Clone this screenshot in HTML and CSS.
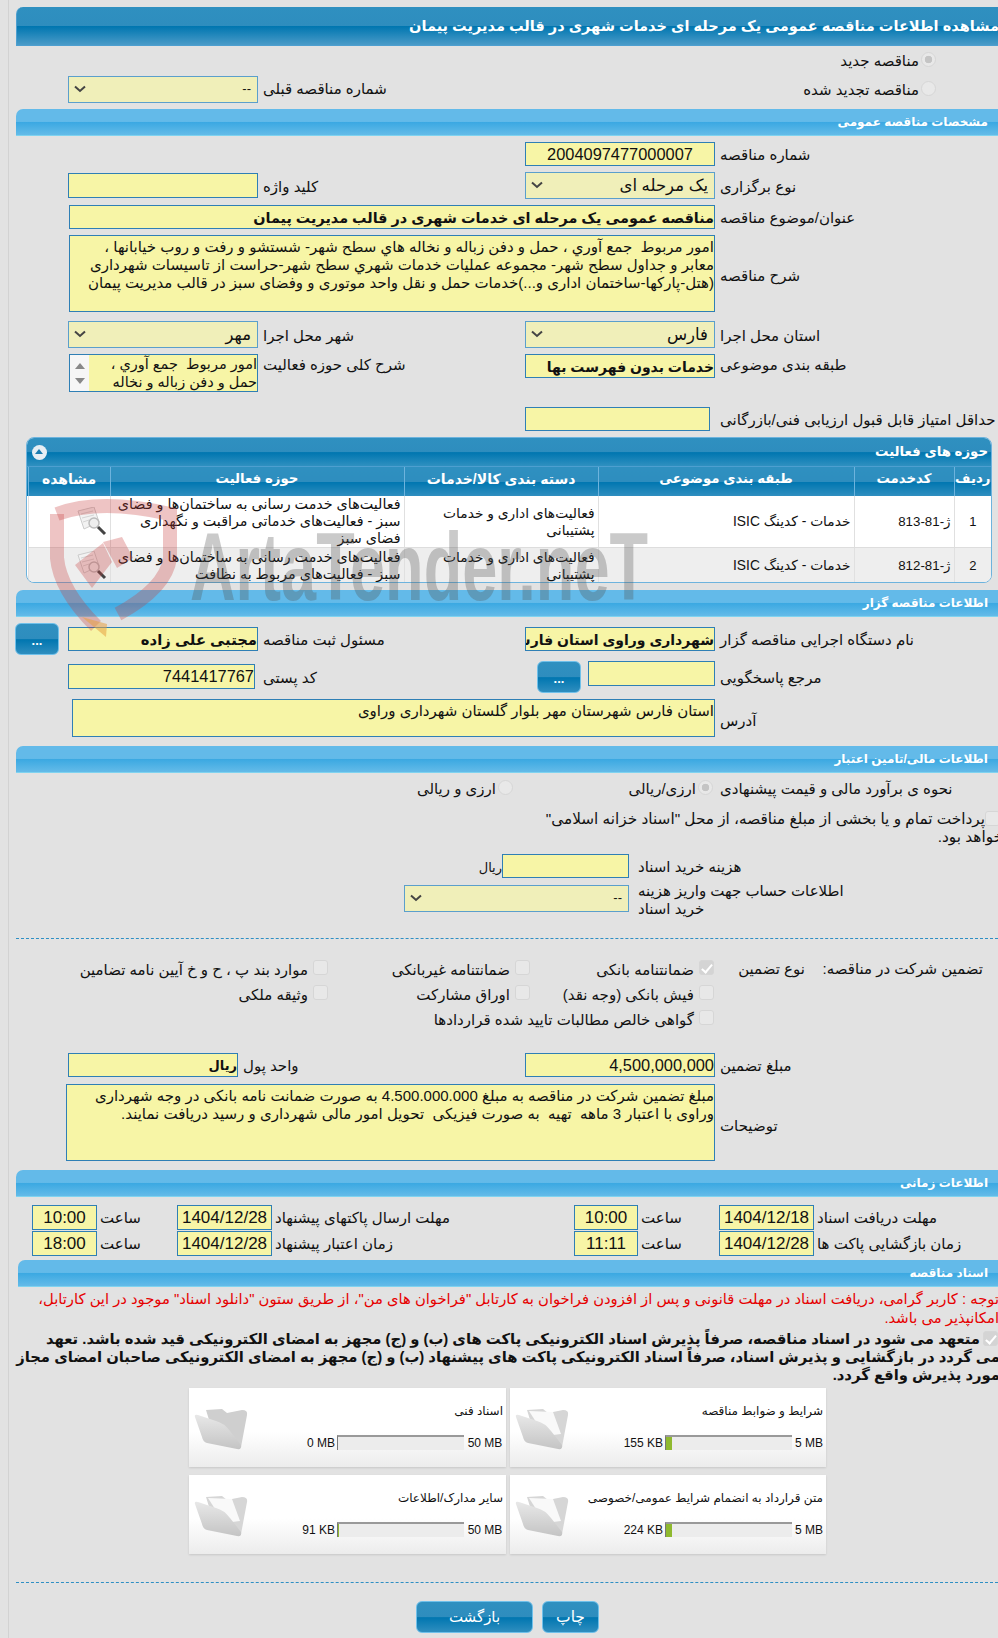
FILE: index.html
```html
<!DOCTYPE html>
<html lang="fa" dir="rtl">
<head>
<meta charset="utf-8">
<title>مشاهده اطلاعات مناقصه</title>
<link rel="stylesheet" href="styles.css">
</head>
<body>
<svg class="defs" width="0" height="0" aria-hidden="true">
  <defs>
    <symbol id="chev" viewBox="0 0 12 8"><path d="M1 1.5 L6 6 L11 1.5" fill="none" stroke="#444" stroke-width="2"/></symbol>
    <linearGradient id="fgrad" x1="0" y1="0" x2="0" y2="1"><stop offset="0" stop-color="#e8e8e8"/><stop offset="1" stop-color="#c4c4c4"/></linearGradient>
    <symbol id="folder" viewBox="0 0 54 44">
      <path d="M12 4 L28 3 L33 7 L48 4 Q54 4 53 9 L47 41 L20 30 Z" fill="#d6d6d6"/>
      <path d="M14 5 L38 6 L46 28 L30 30 Z" fill="#f9f9f9"/>
      <path d="M1 11 Q0 8 4 9 L22 15 Q30 17 36 25 L47 39 Q48 44 43 43 L13 37 Q9 36 8 31 Z" fill="url(#fgrad)"/>
    </symbol>
    <symbol id="folder-empty" viewBox="0 0 54 44">
      <path d="M12 4 L28 3 L33 7 L48 4 Q54 4 53 9 L47 41 L20 30 Z" fill="#cfcfcf"/>
      <path d="M1 11 Q0 8 4 9 L22 15 Q30 17 36 25 L47 39 Q48 44 43 43 L13 37 Q9 36 8 31 Z" fill="url(#fgrad)"/>
    </symbol>
    <symbol id="view" viewBox="0 0 30 30">
      <path d="M1 4 L17 0 L22 15 L7 22 Z" fill="#f2f2f2" stroke="#ccc"/>
      <path d="M4 7 L16 4 M5 11 L17 8 M6 15 L12 13" stroke="#d4d4d4"/>
      <circle cx="17" cy="16" r="5" fill="#eee" stroke="#bbb" stroke-width="1.5"/>
      <path d="M21 20 L28 27" stroke="#444" stroke-width="3"/>
    </symbol>
  </defs>
</svg>
<main class="page">
  <h1 class="title"><span class="title-text">مشاهده اطلاعات مناقصه عمومی یک مرحله ای خدمات شهری در قالب مدیریت پیمان</span></h1>

  <div class="row mt6 h20"><label class="opt opt-top"><input type="radio" disabled checked><span>مناقصه جدید</span></label></div>
  <div class="row mt4 h27">
    <label class="opt opt-top opt-second span2"><input type="radio" disabled><span>مناقصه تجدید شده</span></label>
    <div class="lbl">شماره مناقصه قبلی</div>
    <div class="sel small">--<svg class="chev"><use href="#chev"/></svg></div>
  </div>

  <h2 class="bar mt6">مشخصات مناقصه عمومی</h2>
  <div class="row mt6 h24">
    <div class="lbl">شماره مناقصه</div>
    <div class="fld num center">2004097477000007</div>
  </div>
  <div class="row mt6 h27">
    <div class="lbl lbl-sel">نوع برگزاری</div>
    <div class="sel">یک مرحله ای<svg class="chev"><use href="#chev"/></svg></div>
    <div class="lbl lbl-sel">کلید واژه</div>
    <div class="fld h25 mt1"></div>
  </div>
  <div class="row mt6 h24">
    <div class="lbl">عنوان/موضوع مناقصه</div>
    <div class="fld bold w646">مناقصه عمومی یک مرحله ای خدمات شهری در قالب مدیریت پیمان</div>
  </div>
  <div class="row mt6 h77">
    <div class="lbl lbl-desc-top">شرح مناقصه</div>
    <div class="fld multi w646">امور مربوط&nbsp; جمع آوري ، حمل و دفن زباله و نخاله هاي سطح شهر- شستشو و رفت و روب خیابانها ،<br>معابر و جداول سطح شهر- مجموعه عمليات خدمات شهري سطح شهر-حراست از تاسیسات شهرداری<br>(هتل-پارکها-ساختمان اداری و...)خدمات حمل و نقل واحد موتوری و وفضای سبز در قالب مدیریت پیمان</div>
  </div>
  <div class="row mt9 h27">
    <div class="lbl lbl-sel">استان محل اجرا</div>
    <div class="sel">فارس<svg class="chev"><use href="#chev"/></svg></div>
    <div class="lbl lbl-sel">شهر محل اجرا</div>
    <div class="sel">مهر<svg class="chev"><use href="#chev"/></svg></div>
  </div>
  <div class="row mt6 h38">
    <div class="lbl lbl-top">طبقه بندی موضوعی</div>
    <div class="fld bold h24 tight-bold">خدمات بدون فهرست بها</div>
    <div class="lbl lbl-top">شرح کلی حوزه فعالیت</div>
    <div class="listbox">
      <div class="listbox-text">امور مربوط&nbsp; جمع آوري ،<br>حمل و دفن زباله و نخاله</div>
      <div class="scroll"><span class="arr-up"></span><span class="arr-down"></span></div>
    </div>
  </div>
  <div class="row mt15 h24">
    <div class="lbl nowrap">حداقل امتیاز قابل قبول ارزیابی فنی/بازرگانی</div>
    <div class="fld shift5"></div>
  </div>

  <section class="panel">
    <div class="panel-head"><span>حوزه های فعالیت</span><span class="collapse"></span></div>
    <table class="grid-table">
      <colgroup><col class="c1"><col class="c2"><col class="c3"><col class="c4"><col class="c5"><col class="c6"></colgroup>
      <thead><tr><th>ردیف</th><th>کدخدمت</th><th>طبقه بندی موضوعی</th><th class="th-wide">دسته بندی کالا/خدمات</th><th>حوزه فعالیت</th><th>مشاهده</th></tr></thead>
      <tbody>
        <tr class="r1">
          <td class="ctr">1</td><td class="code">ژ-81-813</td><td class="mid">خدمات - کدینگ ISIC</td>
          <td class="mid">فعالیت‌های اداری و خدمات<br>پشتیبانی</td>
          <td>فعالیت‌های خدمت رسانی به ساختمان‌ها و فضای<br>سبز - فعالیت‌های خدماتی مراقبت و نگهداری<br>فضای سبز</td>
          <td class="icon-cell"><svg class="view"><use href="#view"/></svg></td>
        </tr>
        <tr class="r2">
          <td class="ctr">2</td><td class="code">ژ-81-812</td><td class="mid">خدمات - کدینگ ISIC</td>
          <td class="mid">فعالیت‌های اداری و خدمات<br>پشتیبانی</td>
          <td>فعالیت‌های خدمت رسانی به ساختمان‌ها و فضای<br>سبز - فعالیت‌های مربوط به نظافت</td>
          <td class="icon-cell"><svg class="view"><use href="#view"/></svg></td>
        </tr>
      </tbody>
    </table>
  </section>

  <h2 class="bar mt7">اطلاعات مناقصه گزار</h2>
  <div class="row row5 mt6 h32">
    <div class="lbl lbl-f8">نام دستگاه اجرایی مناقصه گزار</div>
    <div class="fld bold tight-bold mt4 h24">شهرداری وراوی استان فارس</div>
    <div class="lbl lbl-f8">مسئول ثبت مناقصه</div>
    <div class="fld bold big mt4 h24">مجتبی علی زاده</div>
    <button class="btn more" type="button">...</button>
  </div>
  <div class="row mt6 h32">
    <div class="lbl lbl-f8">مرجع پاسخگویی</div>
    <div class="combo"><div class="fld w127 h25"></div><button class="btn more" type="button">...</button></div>
    <div class="lbl lbl-f8">کد پستی</div>
    <div class="fld num w187 h25 mt3">7441417767</div>
  </div>
  <div class="row mt6 h38">
    <div class="lbl lbl-low">آدرس</div>
    <div class="fld multi w643">استان فارس شهرستان مهر بلوار گلستان شهرداری وراوی</div>
  </div>

  <h2 class="bar mt9">اطلاعات مالی/تامین اعتبار</h2>
  <div class="row mt5 h22">
    <div class="lbl lbl-plain">نحوه ی برآورد مالی و قیمت پیشنهادی</div>
    <div class="options span3">
      <label class="opt opt-w"><input type="radio" disabled checked><span>ارزی/ریالی</span></label>
      <label class="opt"><input type="radio" disabled><span>ارزی و ریالی</span></label>
    </div>
  </div>
  <p class="pay"><input type="checkbox" disabled>پرداخت تمام و یا بخشی از مبلغ مناقصه، از محل "اسناد خزانه اسلامی"<br>خواهد بود.</p>
  <div class="row-doc mt6 h24">
    <div class="lbl lbl-doc">هزینه خرید اسناد</div>
    <div class="fld w127"></div>
    <span class="unit">ریال</span>
  </div>
  <div class="row-doc mt7 h27">
    <div class="lbl lbl-two">اطلاعات حساب جهت واریز هزینه<br>خرید اسناد</div>
    <div class="sel small w225">--<svg class="chev"><use href="#chev"/></svg></div>
  </div>
  <hr class="dash dash1">
  <div class="guar">
    <div class="guar-head"><span class="guar-title">تضمین شرکت در مناقصه:</span><span>نوع تضمین</span></div>
    <label class="chk"><input type="checkbox" disabled checked><span>ضمانتنامه بانکی</span></label>
    <label class="chk"><input type="checkbox" disabled><span>ضمانتنامه غیربانکی</span></label>
    <label class="chk"><input type="checkbox" disabled><span>موارد بند پ ، ح و خ آیین نامه تضامین</span></label>
    <span></span>
    <label class="chk"><input type="checkbox" disabled><span>فیش بانکی (وجه نقد)</span></label>
    <label class="chk"><input type="checkbox" disabled><span>اوراق مشارکت</span></label>
    <label class="chk"><input type="checkbox" disabled><span>وثیقه ملکی</span></label>
    <span></span>
    <label class="chk chk-wide"><input type="checkbox" disabled><span>گواهی خالص مطالبات تایید شده قراردادها</span></label>
  </div>
  <div class="row row-amount mt21 h25">
    <div class="lbl">مبلغ تضمین</div>
    <div class="fld num">4,500,000,000</div>
    <div class="lbl">واحد پول</div>
    <div class="fld bold unit-val">ریال</div>
  </div>
  <div class="row mt6 h77">
    <div class="lbl lbl-desc">توضیحات</div>
    <div class="fld multi w649">مبلغ تضمین شرکت در مناقصه به مبلغ 4.500.000.000 به صورت ضمانت نامه بانکی در وجه شهرداری<br>وراوی با اعتبار 3 ماهه&nbsp; تهیه&nbsp; به صورت فیزیکی&nbsp; تحویل امور مالی شهرداری و رسید دریافت نمایند.</div>
  </div>

  <h2 class="bar mt9">اطلاعات زمانی</h2>
  <div class="times mt8">
    <div class="lbl t-lbl">مهلت دریافت اسناد</div><div class="fld tval">1404/12/18</div>
    <div class="lbl t-lbl">ساعت</div><div class="fld tval">10:00</div>
    <div class="lbl t-lbl">مهلت ارسال پاکتهای پیشنهاد</div><div class="fld tval">1404/12/28</div>
    <div class="lbl t-lbl">ساعت</div><div class="fld tval">10:00</div>
    <div class="lbl t-lbl">زمان بازگشایی پاکت ها</div><div class="fld tval">1404/12/28</div>
    <div class="lbl t-lbl">ساعت</div><div class="fld tval">11:11</div>
    <div class="lbl t-lbl">زمان اعتبار پیشنهاد</div><div class="fld tval">1404/12/28</div>
    <div class="lbl t-lbl">ساعت</div><div class="fld tval">18:00</div>
  </div>

  <h2 class="bar bar-docs mt4">اسناد مناقصه</h2>
  <p class="notice">توجه : کاربر گرامی، دریافت اسناد در مهلت قانونی و پس از افزودن فراخوان به کارتابل "فراخوان های من"، از طریق ستون "دانلود اسناد" موجود در این کارتابل،<br>امکانپذیر می باشد.</p>
  <p class="pledge"><input type="checkbox" disabled checked>متعهد می شود در اسناد مناقصه، صرفاً پذیرش اسناد الکترونیکی پاکت های (ب) و (ج) مجهز به امضای الکترونیکی قید شده باشد. تعهد<br>می گردد در بازگشایی و پذیرش اسناد، صرفاً اسناد الکترونیکی پاکت های پیشنهاد (ب) و (ج) مجهز به امضای الکترونیکی صاحبان امضای مجاز<br>مورد پذیرش واقع گردد.</p>

  <div class="cards">
    <article class="card">
      <div class="card-body">
        <div class="card-title">شرایط و ضوابط مناقصه</div>
        <div class="meter"><span class="limit">5 MB</span><span class="track"><span class="fill" style="width:6px"></span></span><span class="size">155 KB</span></div>
      </div>
      <svg class="folder"><use href="#folder"/></svg>
    </article>
    <article class="card">
      <div class="card-body">
        <div class="card-title">اسناد فنی</div>
        <div class="meter"><span class="limit wide">50 MB</span><span class="track"><span class="fill" style="width:0"></span></span><span class="size">0 MB</span></div>
      </div>
      <svg class="folder"><use href="#folder-empty"/></svg>
    </article>
    <article class="card">
      <div class="card-body">
        <div class="card-title">متن قرارداد به انضمام شرایط عمومی/خصوصی</div>
        <div class="meter"><span class="limit">5 MB</span><span class="track"><span class="fill" style="width:6px"></span></span><span class="size">224 KB</span></div>
      </div>
      <svg class="folder"><use href="#folder"/></svg>
    </article>
    <article class="card">
      <div class="card-body">
        <div class="card-title">سایر مدارک/اطلاعات</div>
        <div class="meter"><span class="limit wide">50 MB</span><span class="track"><span class="fill" style="width:1px"></span></span><span class="size">91 KB</span></div>
      </div>
      <svg class="folder"><use href="#folder"/></svg>
    </article>
  </div>
  <hr class="dash dash2">
  <div class="actions">
    <button class="btn act-print" type="button">چاپ</button>
    <button class="btn act-back" type="button">بازگشت</button>
  </div>

  <svg class="watermark" viewBox="0 0 620 160" aria-hidden="true">
    <g fill="none" stroke="#c83c3c" stroke-opacity=".3" stroke-width="14">
      <path d="M17 24 Q60 8 130 24 L130 68 Q126 98 78 124"/>
      <path d="M17 24 L17 68 Q20 100 56 136"/>
    </g>
    <path d="M63 52 L82 47 L93 68 L77 78 Z M35 75 L63 53 L72 72 L52 98 Z" fill="#c83c3c" fill-opacity=".3"/>
    <path d="M42 127 L67 134 L66 147 Z" fill="#e8a040" fill-opacity=".55"/>
    <text class="wm-text" x="150" y="110" textLength="458" lengthAdjust="spacingAndGlyphs">ArtaTender.neT</text>
  </svg>
</main>
</body>
</html>
```
FILE: styles.css
```css
* { box-sizing: border-box; }
html, body { margin: 0; padding: 0; }
body {
  width: 998px; height: 1638px; overflow: hidden;
  background: #e2e2e2;
  font: 15px/18px "Liberation Sans", "DejaVu Sans", sans-serif;
  color: #111;
}
.defs { position: absolute; }
.page {
  position: relative;
  width: 990px; height: 1638px;
  margin-left: 8px;
  padding: 7px 0 0 7px;
  border-left: 1px solid #d2d2d2;
  overflow: hidden;
}
p, h1, h2 { margin: 0; }

.title {
  height: 39px;
  display: flex; align-items: center;
  white-space: nowrap;
  color: #fff; font-size: 14.55px; font-weight: bold;
  background: linear-gradient(#2f90c0 0, #2e8dbe 50%, #0076b0 51%, #4a9bc8 100%);
  border: 1px solid #4d9fd0; border-top: 0; border-right: 0;
  border-top-left-radius: 7px;
  overflow: hidden;
}
.title-text { margin-right: -1px; }

.bar {
  height: 27px;
  padding: 0 10px 0 0;
  color: #fff; font-size: 12px; font-weight: bold; line-height: 26px;
  background: linear-gradient(#63bae9 0, #63bae9 48%, #3aa8e2 50%, #64bbe8 100%);
  border-bottom: 1px solid #7fd3f0;
  border-top-left-radius: 7px;
}
.bar-docs { margin-left: 2px; }

.row {
  display: grid;
  grid-template-columns: 283px 190px 267px 190px;
  align-items: start;
}
.row5 { grid-template-columns: 283px 190px 267px 190px 53px; }
.row-amount { grid-template-columns: 283px 190px 287px 170px; }
.row-doc { display: grid; grid-template-columns: 369px auto auto; justify-content: start; align-items: start; }
.span2 { grid-column: span 2; }
.span3 { grid-column: span 3; }

.mt1 { margin-top: 1px; } .mt3 { margin-top: 3px; } .mt4 { margin-top: 4px; } .mt5 { margin-top: 5px; }
.mt6 { margin-top: 6px; } .mt7 { margin-top: 7px; } .mt8 { margin-top: 8px; } .mt9 { margin-top: 9px; }
.mt15 { margin-top: 15px; } .mt21 { margin-top: 21px; }
.h20 { height: 20px; } .h22 { height: 22px; } .h24 { height: 24px; } .h25 { height: 25px; }
.h27 { height: 27px; } .h32 { height: 32px; } .h38 { height: 38px; } .h77 { height: 77px; }

.lbl { text-align: left; padding: 4px 0 0 5px; white-space: nowrap; }
.lbl-sel { padding-top: 6px; }
.lbl-top { padding-top: 2px; }
.lbl-f8 { padding-top: 8px; }
.lbl-plain { padding-top: 2px; }
.lbl-low { padding-top: 13px; }
.lbl-desc { padding-top: 33px; }
.lbl-desc-top { padding-top: 32px; }
.lbl-doc { padding: 4px 0 0 9px; }
.lbl-two { padding: 0 0 0 9px; margin-top: -3px; }
.nowrap { white-space: nowrap; }

.fld {
  height: 24px;
  background: #f7f5a6;
  border: 1px solid #2f7fb5;
  overflow: hidden;
  white-space: nowrap;
  line-height: 22px;
}
.fld.h25 { height: 25px; }
.num { font-size: 16.4px; direction: ltr; text-align: right; }
.num.center { text-align: center; }
.bold { font-weight: bold; font-size: 14.4px; line-height: 24px; }
.big { font-size: 14.8px; }
.tight-bold { font-size: 14px; }
.unit-val { font-size: 13px; }
.multi { height: 100%; line-height: 18px; padding-top: 2px; }
.w127 { width: 127px; }
.w187 { width: 187px; justify-self: end; }
.w225 { width: 225px; }
.w643 { width: 643px; grid-column: span 3; }
.w646 { width: 646px; grid-column: span 3; }
.w649 { width: 649px; grid-column: span 3; }
.shift5 { margin-right: 5px; }

.sel {
  position: relative;
  height: 27px; padding-right: 6px;
  background: #f0efb9;
  border: 1px solid #5b9fcc;
  font-size: 16.5px; line-height: 25px;
}
.sel.small { font-size: 13px; line-height: 23px; }
.chev { position: absolute; left: 5px; top: 8px; width: 12px; height: 8px; }

.opt { display: flex; align-items: flex-start; gap: 2px; }
.opt-top { padding-right: 62px; }
.opt-second { padding-top: 5px; }
.opt-w { width: 200px; }
.options { display: flex; padding: 2px 2px 0 0; }
input[type=radio], input[type=checkbox] {
  appearance: none; margin: 0; flex: none;
  width: 15px; height: 15px;
  background: #e8e8e8;
  border: 1px solid #d6d6d6;
}
input[type=radio] { border-radius: 50%; }
input[type=radio]:checked { background: radial-gradient(circle, #c4c4c4 0, #c4c4c4 38%, #e8e8e8 44%); }
input[type=checkbox] { border-radius: 3px; }
input[type=checkbox]:checked { background: #d4d4d4; position: relative; }
input[type=checkbox]:checked::after {
  content: ""; position: absolute; left: 4px; top: 1px;
  width: 4px; height: 9px;
  border: solid #fff; border-width: 0 2px 2px 0;
  transform: rotate(40deg);
}

.listbox {
  display: flex; justify-content: space-between;
  width: 189px; height: 38px;
  border: 1px solid #2f7fb5;
  background: #f7f5a6;
  overflow: hidden;
  white-space: nowrap;
  font-size: 14.5px;
}
.scroll {
  flex: none; width: 19px;
  background: #f6f6f6;
  display: flex; flex-direction: column; justify-content: space-around; align-items: center;
  padding: 3px 0;
}
.arr-up { border: 5px solid transparent; border-top: 0; border-bottom: 6px solid #888; }
.arr-down { border: 5px solid transparent; border-bottom: 0; border-top: 6px solid #888; }

.panel {
  margin: 6px 6px 0 10px;
  height: 146px;
  border: 1px solid #6db3dd;
  border-radius: 8px;
  background: #fff linear-gradient(#2f90c0, #0076b0) no-repeat 0 29px / 100% 29px;
  overflow: hidden;
}
.panel-head {
  display: flex; justify-content: space-between; align-items: center;
  height: 29px; padding: 0 3px 0 5px;
  color: #fff; font-weight: bold; font-size: 13.3px;
  background: linear-gradient(#2f90c0 0, #2e8dbe 50%, #0076b0 52%, #2f90c0 100%);
  border-bottom: 1px solid #4d9fd0;
}
.collapse {
  position: relative;
  width: 15px; height: 15px; border-radius: 50%; background: #e6eef4;
}
.collapse::after {
  content: ""; position: absolute; left: 3px; top: 4px;
  border: 4px solid transparent; border-top: 0; border-bottom: 5px solid #1c7cb0;
}
.grid-table {
  width: 963px;
  table-layout: fixed; border-collapse: collapse;
}
.c1 { width: 37px; } .c2 { width: 100px; } .c3 { width: 256px; } .c4 { width: 194px; } .c5 { width: 294px; } .c6 { width: 82px; }
th {
  height: 29px; padding: 0 0 6px;
  color: #fff; font-weight: bold; font-size: 13.3px;
  background: linear-gradient(#2f90c0 0, #2e8dbe 50%, #0076b0 52%, #2f8ebf 100%);
  border: 1px solid #6db3dd; border-width: 0 0 0 1px;
}
th:last-child { border-right: 1px solid #6db3dd; font-size: 14px; }
th.th-wide { font-size: 14px; }
td {
  padding: 0 3px;
  text-align: right; vertical-align: middle;
  line-height: 17px; font-size: 14.3px;
  border-left: 1px solid #e0e0e0;
  white-space: nowrap;
  overflow: hidden;
}
td.mid { font-size: 13.8px; }
td.ctr { text-align: center; font-size: 13px; }
td.code { font-size: 13.3px; }
.r1 td { height: 51px; background: #fff; border-bottom: 1px solid #ddd; }
.r2 td { height: 36px; background: #eee; }
.view { width: 30px; height: 30px; display: block; margin: 0 0 0 auto; }

.btn {
  display: block; padding: 0;
  color: #fff; font: inherit;
  background: linear-gradient(#2f90c0 0, #2e8dbe 50%, #0076b0 52%, #2f8ebf 100%);
  border: 1px solid #6fc0ea; border-radius: 6px;
}
.more { width: 44px; height: 32px; justify-self: end; font-size: 13px; line-height: 34px; font-weight: bold; }
.combo { display: flex; gap: 7px; }
.combo .fld { flex: none; }

.pay { margin: 10px -5px 0 0; height: 38px; white-space: nowrap; font-size: 15.3px; }
.pay input { vertical-align: -2px; margin-right: 3px; }
.unit { font-size: 13px; line-height: 26px; margin-top: 1px; }

.dash { border: 0; border-top: 1px dashed #2f8fc4; margin: 0; }
.dash1 { margin-top: 26px; }
.dash2 { margin-top: 28px; }

.guar {
  display: grid;
  grid-template-columns: 284px 184px 202px 1fr;
  grid-auto-rows: 25px;
  margin-top: 18px;
}
.guar-head { display: flex; padding: 3px 15px 0 0; white-space: nowrap; }
.guar-title { width: 178px; }
.chk { display: flex; align-items: center; gap: 5px; white-space: nowrap; }
.chk input { margin-top: -5px; }
.chk-wide { grid-column: span 3; }

.times {
  display: grid;
  grid-template-columns: 184px 95px 81px 64px 302px 95px 80px 65px;
  grid-auto-rows: 25px;
  row-gap: 1px;
}
.t-lbl { padding-left: 3px; padding-top: 4px; }
.tval { height: 25px; font-size: 17px; text-align: center; direction: ltr; line-height: 23px; }

.notice { margin: 3px -1px 0 0; color: #e60000; white-space: nowrap; line-height: 18.5px; font-size: 14.78px; }
.pledge { margin: 3px -2px 0 0; height: 54px; line-height: 18px; font-size: 14.8px; font-weight: bold; white-space: nowrap; }
.pledge input { vertical-align: -2px; margin-left: 3px; margin-right: 2px; }

.cards {
  display: grid;
  grid-template-columns: 316px 317px;
  grid-auto-rows: 79px;
  gap: 8px 4px;
  justify-content: start;
  padding-right: 172px;
  margin-top: 4px;
}
.card {
  position: relative;
  display: flex; justify-content: space-between;
  padding: 14px 0 0 5px;
  background: linear-gradient(#fff 55%, #ececec 100%);
  box-shadow: 0 1px 2px rgba(0,0,0,.12);
  font-size: 12px;
}
.card-title { height: 31px; padding-right: 3px; line-height: 18px; white-space: nowrap; }
.card-body { flex: 1; }
.meter { display: flex; align-items: flex-end; height: 17px; }
.limit, .size { direction: ltr; line-height: 14px; white-space: nowrap; font-size: 12px; }
.limit { width: 34px; text-align: center; }
.limit.wide { width: 42px; }
.size { margin-right: 2px; }
.track {
  display: flex; direction: ltr;
  width: 127px; height: 15px;
  background: #ececec;
  border-top: 2px solid #999;
  border-left: 1px solid #777;
}
.fill { display: block; background: #8fb92f; }
.folder { flex: none; width: 54px; height: 44px; margin-top: 4px; }

.actions { display: flex; gap: 9px; padding-right: 399px; margin-top: 18px; }
.act-print { width: 57px; height: 32px; font-size: 15.5px; }
.act-back { width: 117px; height: 32px; font-size: 15px; }

.watermark { position: absolute; left: 31px; top: 490px; width: 620px; height: 160px; pointer-events: none; direction: ltr; }
.wm-text { font: bold 96px "Liberation Sans", sans-serif; fill: #505050; fill-opacity: .3; }
```
